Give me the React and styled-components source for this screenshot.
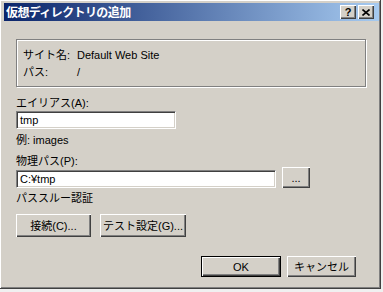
import React from 'react';
import styled, { createGlobalStyle } from 'styled-components';

const GlobalStyle = createGlobalStyle`
  html, body {
    margin: 0;
    padding: 0;
    background: #f0f0f0;
  }
  body {
    font-family: "Liberation Sans", "Noto Sans CJK JP", sans-serif;
    font-size: 11px;
    color: #000;
  }
`;

const Window = styled.div`
  width: 380px;
  height: 288px;
  background: #d4d0c8;
  border-right: 1px solid #404040;
  border-bottom: 1px solid #404040;
  box-shadow: inset 1px 1px 0 #fff, inset -1px -1px 0 #808080;
  display: flex;
  flex-direction: column;
`;

const TitleBar = styled.div`
  height: 18px;
  margin: 3px 1px 0 4px;
  background: linear-gradient(to right, #0a246a, #a6caf0);
  display: flex;
  align-items: center;
  padding: 0 5px 0 2px;
`;

const Title = styled.span`
  flex: 1;
  color: #fff;
  font-family: "Noto Sans CJK JP", sans-serif;
  font-weight: bold;
  font-size: 12px;
  letter-spacing: -0.6px;
  line-height: 18px;
`;

const CaptionButton = styled.div`
  width: 16px;
  height: 14px;
  box-sizing: border-box;
  margin-left: ${(p) => (p.$gap ? '2px' : '0')};
  background: #d4d0c8;
  box-shadow: inset 1px 1px 0 #fff, inset -1px -1px 0 #404040,
    inset -2px -2px 0 #808080;
  display: flex;
  align-items: center;
  justify-content: center;
  font-family: "Liberation Sans", sans-serif;
  font-weight: bold;
  font-size: 11px;
  line-height: 14px;
`;

const Body = styled.div`
  flex: 1;
  display: flex;
  flex-direction: column;
  padding: 18px 24px 0 16px;
`;

const GroupBox = styled.div`
  width: 342px;
  height: 38px;
  border: 1px solid #808080;
  box-shadow: 1px 1px 0 #fff, inset 1px 1px 0 #fff;
  display: grid;
  grid-template-columns: 54px auto;
  grid-auto-rows: 17px;
  align-content: start;
  padding: 8px 0 0 6px;
  box-sizing: content-box;
`;

const Text = styled.div`
  line-height: 14px;
  height: 14px;
  margin-top: ${(p) => p.$mt || 0}px;
  white-space: nowrap;
`;

const Input = styled.div`
  width: ${(p) => p.$w}px;
  height: 18px;
  box-sizing: border-box;
  margin-top: ${(p) => p.$mt || 0}px;
  background: #fff;
  border-top: 1px solid #808080;
  border-left: 1px solid #808080;
  border-right: 1px solid #fff;
  border-bottom: 1px solid #fff;
  box-shadow: inset 1px 1px 0 #404040, inset -1px -1px 0 #d4d0c8;
  padding: 1px 0 0 3px;
  line-height: 14px;
`;

const Row = styled.div`
  display: flex;
  align-items: ${(p) => p.$align || 'flex-start'};
  justify-content: ${(p) => p.$justify || 'flex-start'};
  gap: ${(p) => p.$gap || 0}px;
  margin-top: ${(p) => p.$mt || 0}px;
`;

const Button = styled.div`
  width: ${(p) => p.$w}px;
  height: ${(p) => p.$h}px;
  box-sizing: border-box;
  background: #d4d0c8;
  border: ${(p) => (p.$default ? '1px solid #000' : 'none')};
  box-shadow: inset 1px 1px 0 #fff, inset -1px -1px 0 #404040,
    inset -2px -2px 0 #808080;
  display: flex;
  align-items: center;
  justify-content: center;
  line-height: 14px;
  white-space: nowrap;
`;

export default function App() {
  return (
    <>
      <GlobalStyle />
      <Window>
        <TitleBar>
          <Title>仮想ディレクトリの追加</Title>
          <CaptionButton>?</CaptionButton>
          <CaptionButton $gap>
            <svg width="8" height="7" viewBox="0 0 8 7">
              <path d="M0.5 0.5 L7.5 6.5 M7.5 0.5 L0.5 6.5" stroke="#000" strokeWidth="1.6" />
            </svg>
          </CaptionButton>
        </TitleBar>
        <Body>
          <GroupBox>
            <Text>サイト名:</Text>
            <Text>Default Web Site</Text>
            <Text>パス:</Text>
            <Text>/</Text>
          </GroupBox>
          <Text $mt={9}>エイリアス(A):</Text>
          <Input $w={160} $mt={1}>tmp</Input>
          <Text $mt={4}>例: images</Text>
          <Text $mt={7}>物理パス(P):</Text>
          <Row $align="flex-end" $gap={6} $mt={-1}>
            <Input $w={260}>C:¥tmp</Input>
            <Button $w={28} $h={21}>...</Button>
          </Row>
          <Text $mt={3}>パススルー認証</Text>
          <Row $gap={9} $mt={9}>
            <Button $w={75} $h={23}>接続(C)...</Button>
            <Button $w={86} $h={23}>テスト設定(G)...</Button>
          </Row>
          <Row $justify="flex-end" $gap={6} $mt={19}>
            <Button $w={80} $h={21} $default>OK</Button>
            <Button $w={69} $h={21}>キャンセル</Button>
          </Row>
        </Body>
      </Window>
    </>
  );
}
